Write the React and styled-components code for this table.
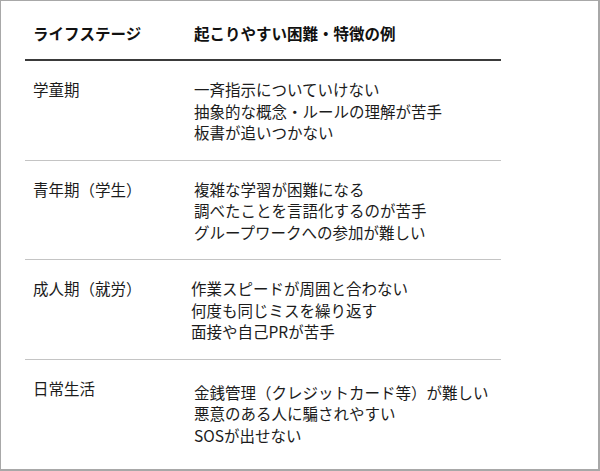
import React from "react";
import styled, { createGlobalStyle } from "styled-components";

const rows = [
  {
    stage: "学童期",
    items: ["一斉指示についていけない", "抽象的な概念・ルールの理解が苦手", "板書が追いつかない"],
  },
  {
    stage: "青年期（学生）",
    items: ["複雑な学習が困難になる", "調べたことを言語化するのが苦手", "グループワークへの参加が難しい"],
  },
  {
    stage: "成人期（就労）",
    items: ["作業スピードが周囲と合わない", "何度も同じミスを繰り返す", "面接や自己PRが苦手"],
    shift: -3,
  },
  {
    stage: "日常生活",
    items: ["金銭管理（クレジットカード等）が難しい", "悪意のある人に騙されやすい", "SOSが出せない"],
    drop: 4,
  },
];

const App = () => {
  return (
    <>
      <GlobalStyle />
      <Frame>
        <Table>
          <HeaderRow>
            <HeadCell>ライフステージ</HeadCell>
            <HeadCell>起こりやすい困難・特徴の例</HeadCell>
          </HeaderRow>
          {rows.map((row, i) => (
            <Row key={row.stage} $last={i === rows.length - 1}>
              <Stage>{row.stage}</Stage>
              <Items $shift={row.shift || 0} $drop={row.drop || 0}>
                {row.items.map((item) => (
                  <Item key={item}>{item}</Item>
                ))}
              </Items>
            </Row>
          ))}
        </Table>
      </Frame>
    </>
  );
};

const GlobalStyle = createGlobalStyle`
  body {
    margin: 0;
    background: #fff;
    font-family: "Noto Sans CJK JP", "Noto Sans", sans-serif;
    color: #1c1c1c;
  }
`;

const Frame = styled.div`
  width: 600px;
  height: 471px;
  box-sizing: border-box;
  border: 1px solid #a8a8a8;
  border-right-width: 2px;
  border-bottom-width: 2px;
  background: #fff;
  padding-left: 24px;
`;

const Table = styled.div`
  width: 476px;
  display: flex;
  flex-direction: column;
`;

const HeaderRow = styled.div`
  display: grid;
  grid-template-columns: 161px 1fr;
  padding: 21px 0 15px 8px;
  border-bottom: 2px solid #3a3a3a;
`;

const HeadCell = styled.span`
  font-size: 15.5px;
  line-height: 22px;
  font-weight: 700;
  color: #111;
`;

const Row = styled.div`
  display: grid;
  grid-template-columns: 161px 1fr;
  padding: 18px 0 16px 8px;
  border-bottom: ${(p) => (p.$last ? "none" : "1.5px solid #c4c4c4")};
`;

const Stage = styled.span`
  font-size: 15.5px;
  line-height: 21.5px;
`;

const Items = styled.div`
  display: flex;
  flex-direction: column;
  margin-left: ${(p) => p.$shift}px;
  padding-top: ${(p) => p.$drop}px;
`;

const Item = styled.span`
  font-size: 15.5px;
  line-height: 21.5px;
  white-space: nowrap;
`;

export default App;
